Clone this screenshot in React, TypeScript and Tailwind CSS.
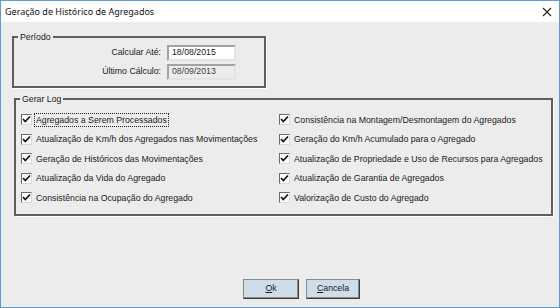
const leftItems = [
  "Agregados a Serem Processados",
  "Atualização de Km/h dos Agregados nas Movimentações",
  "Geração de Históricos das Movimentações",
  "Atualização da Vida do Agregado",
  "Consistência na Ocupação do Agregado",
];

const rightItems = [
  "Consistência na Montagem/Desmontagem do Agregados",
  "Geração do Km/h Acumulado para o Agregado",
  "Atualização de Propriedade e Uso de Recursos para Agregados",
  "Atualização de Garantia de Agregados",
  "Valorização de Custo do Agregado",
];

const CheckBox = () => (
  <span className="w-[11px] h-[11px] shrink-0 bg-white border border-t-[#6b6b6b] border-l-[#6b6b6b] border-b-[#d8d8d8] border-r-[#d8d8d8] flex items-center justify-center">
    <svg width="9" height="9" viewBox="0 0 9 9">
      <path d="M1 4 L3.3 6.5 L8 1.5" fill="none" stroke="#111" strokeWidth="1.7" />
    </svg>
  </span>
);

const Item = ({ label, focus }: { label: string; focus?: boolean }) => (
  <div className="h-[19.5px] flex items-center gap-[2px] whitespace-nowrap">
    <CheckBox />
    <span
      className={
        focus
          ? "px-[1px] leading-[12px] border border-dotted border-[#222]"
          : "px-[2px] leading-[12px]"
      }
    >
      {label}
    </span>
  </div>
);

export default function App() {
  return (
    <div className="w-[560px] h-[308px] bg-[#ececec] border-x border-y border-[#5b9bd5] flex flex-col text-[8.75px] text-[#1a1a1a] font-['Liberation_Sans',Arial,sans-serif] overflow-hidden">
      {/* Title bar */}
      <div className="h-[21px] shrink-0 bg-white flex items-center justify-between pl-[4px] pr-[7px]">
        <span className="text-[9px] text-[#111] font-['Noto_Sans',sans-serif]">
          Geração de Histórico de Agregados
        </span>
        <svg width="10" height="10" viewBox="0 0 10 10">
          <path d="M1 1 L9 9 M9 1 L1 9" stroke="#222" strokeWidth="1.1" />
        </svg>
      </div>

      {/* Período */}
      <fieldset className="ml-[11px] mt-[9px] w-[254px] border-2 border-[#5e5e5e] shadow-[1px_1px_0_#fff] px-0 pb-[6px]">
        <legend className="ml-[4px] px-[2px] leading-[12px]">Período</legend>
        <div className="flex flex-col gap-[3px] mt-[2px]">
          <div className="flex items-center gap-[6px]">
            <span className="w-[147px] text-right">Calcular Até:</span>
            <div className="w-[69px] h-[16px] bg-white border-2 border-t-[#a3a3a3] border-l-[#a3a3a3] border-b-[#e3e3e3] border-r-[#e3e3e3] flex items-center pl-[3px]">
              18/08/2015
            </div>
          </div>
          <div className="flex items-center gap-[6px]">
            <span className="w-[147px] text-right">Último Cálculo:</span>
            <div className="w-[69px] h-[16px] bg-[#ececec] border-2 border-t-[#a3a3a3] border-l-[#a3a3a3] border-b-[#e3e3e3] border-r-[#e3e3e3] flex items-center pl-[3px] text-[#444]">
              08/09/2013
            </div>
          </div>
        </div>
      </fieldset>

      {/* Gerar Log */}
      <fieldset className="ml-[13px] mt-[5px] w-[539px] border-2 border-[#5e5e5e] shadow-[1px_1px_0_#fff] px-0 pb-[6px]">
        <legend className="ml-[4px] px-[2px] leading-[12px]">Gerar Log</legend>
        <div className="grid grid-cols-[258px_1fr] pl-[5px] mt-[5px]">
          <div className="flex flex-col">
            {leftItems.map((l, i) => (
              <Item key={l} label={l} focus={i === 0} />
            ))}
          </div>
          <div className="flex flex-col">
            {rightItems.map((l) => (
              <Item key={l} label={l} />
            ))}
          </div>
        </div>
      </fieldset>

      {/* Buttons */}
      <div className="mt-auto mb-[8px] flex gap-[7px] pl-[242px]">
        <button className="w-[56px] h-[20px] bg-[#cfdcea] border border-t-[#8a8a8a] border-l-[#8a8a8a] border-b-[#3a3a3a] border-r-[#3a3a3a] shadow-[inset_-1px_-1px_0_#8a8a8a]">
          <span className="underline">O</span>k
        </button>
        <button className="w-[54px] h-[20px] bg-[#cfdcea] border border-t-[#8a8a8a] border-l-[#8a8a8a] border-b-[#3a3a3a] border-r-[#3a3a3a] shadow-[inset_-1px_-1px_0_#8a8a8a]">
          <span className="underline">C</span>ancela
        </button>
      </div>
    </div>
  );
}
